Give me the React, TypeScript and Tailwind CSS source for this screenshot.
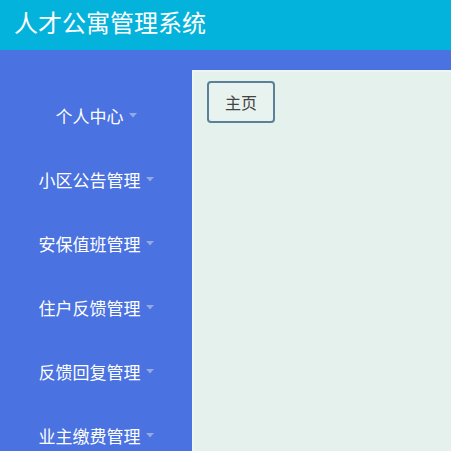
import React from "react";

const menus = ["个人中心", "小区公告管理", "安保值班管理", "住户反馈管理", "反馈回复管理", "业主缴费管理"];

function Caret() {
    return (
        <svg width="8" height="5" viewBox="0 0 8 5" className="ml-[5px] mt-[1px]">
            <path d="M0 0h8L4 4.5z" fill="#93a9e6" />
        </svg>
    );
}

export default function App() {
    return (
        <div
            className="w-[451px] h-[451px] overflow-hidden flex flex-col bg-[#4a72e0]"
            style={{ fontFamily: '"Noto Sans CJK SC", "Noto Sans", sans-serif' }}
        >
            {/* Header */}
            <header className="h-[50px] shrink-0 bg-[#04b3dc] flex items-center pl-[14px]">
                <h1 className="text-[24px] leading-none text-white -mt-[6px]">人才公寓管理系统</h1>
            </header>

            <div className="flex flex-1 min-h-0">
                {/* Sidebar */}
                <nav className="w-[192px] shrink-0 pt-[33px] flex flex-col">
                    {menus.map((m) => (
                        <div key={m} className="h-[64px] shrink-0 flex items-center justify-center">
                            <span className="text-[17px] leading-none text-white">{m}</span>
                            <Caret />
                        </div>
                    ))}
                </nav>

                {/* Main */}
                <main className="flex-1 mt-[20px] bg-[#e5f1ec] border-l-2 border-t-2 border-[#eef5f5] pl-[13px] pt-[9px]">
                    <button className="w-[68px] h-[42px] rounded-[4px] border-2 border-[#5b8198] bg-[#e8f2ef] text-[16px] text-[#444] flex items-center justify-center">
                        主页
                    </button>
                </main>
            </div>
        </div>
    );
}
